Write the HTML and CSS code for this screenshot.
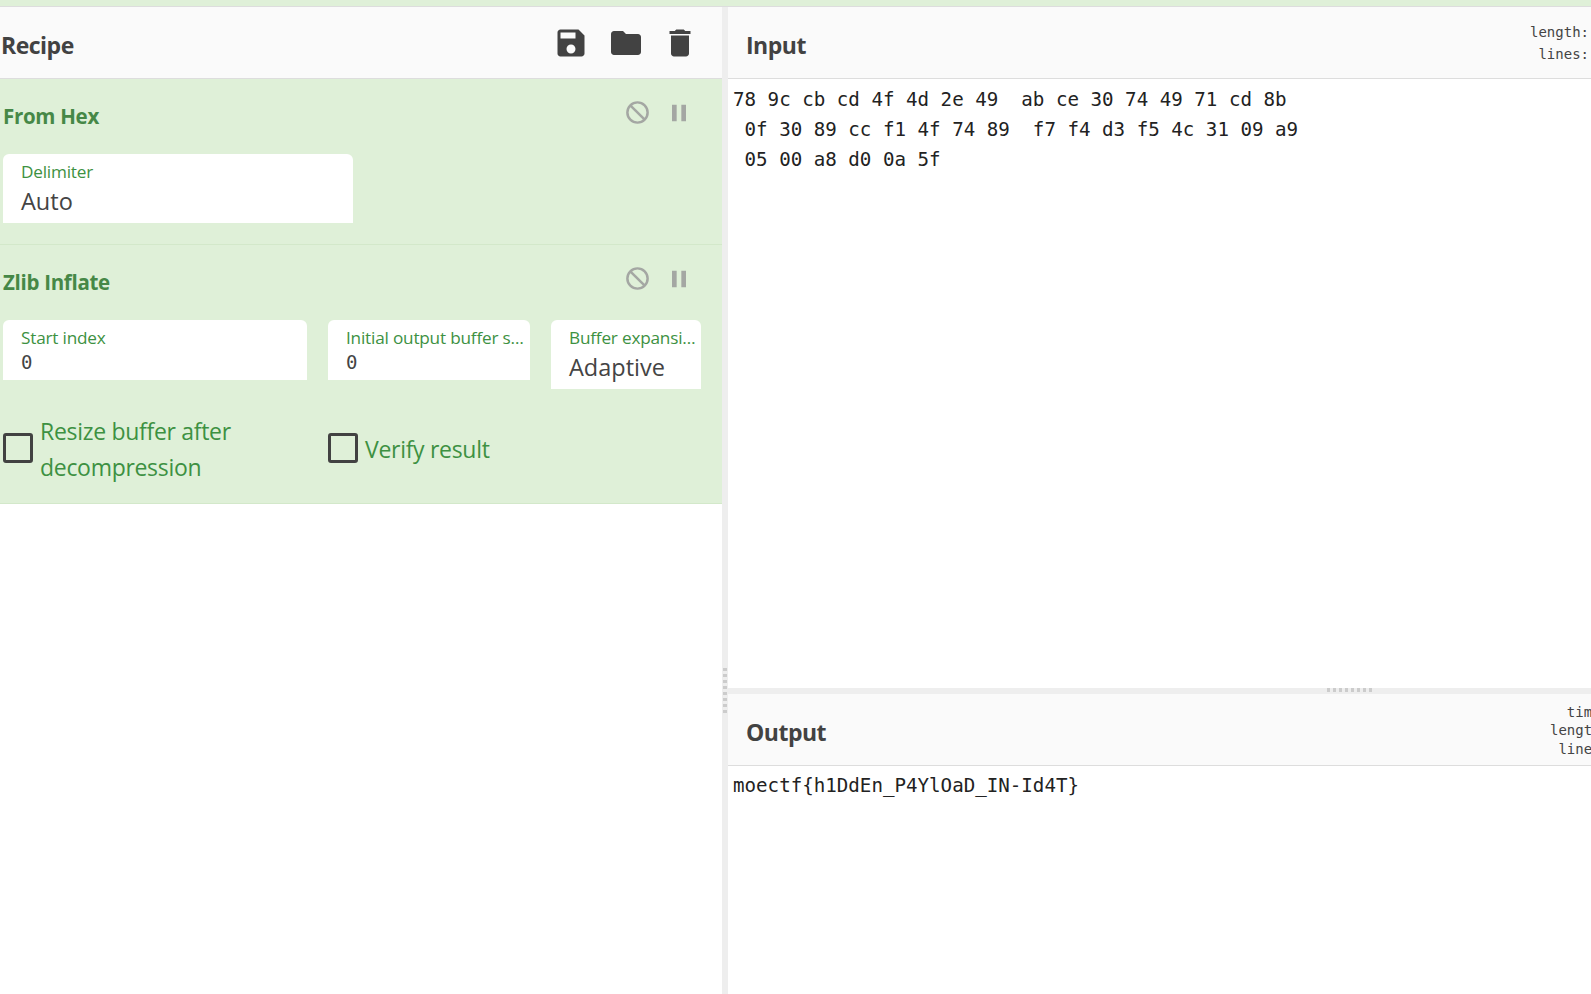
FILE: index.html
```html
<!DOCTYPE html>
<html lang="en">
<head>
<meta charset="utf-8">
<title>CyberChef</title>
<link rel="stylesheet" href="styles.css">
</head>
<body>
<div class="strip"></div>
<main class="workspace">
  <section class="recipe">
    <header class="bar recipe-bar">
      <h2 class="title recipe-title">Recipe</h2>
      <div class="tools">
        <svg class="tool" viewBox="0 0 24 24"><path d="M17 3H5c-1.11 0-2 .9-2 2v14c0 1.1.89 2 2 2h14c1.1 0 2-.9 2-2V7l-4-4zm-5 16c-1.66 0-3-1.34-3-3s1.34-3 3-3 3 1.34 3 3-1.34 3-3 3zm3-10H5V5h10v4z"/></svg>
        <svg class="tool" viewBox="0 0 24 24"><path d="M10 4H4c-1.1 0-1.99.9-1.99 2L2 18c0 1.1.9 2 2 2h16c1.1 0 2-.9 2-2V8c0-1.1-.9-2-2-2h-8l-2-2z"/></svg>
        <svg class="tool" viewBox="0 0 24 24"><path d="M6 19c0 1.1.9 2 2 2h8c1.1 0 2-.9 2-2V7H6v12zM19 4h-3.5l-1-1h-5l-1 1H5v2h14V4z"/></svg>
      </div>
    </header>
    <article class="op op-hex">
      <div class="op-head">
        <h3 class="op-title">From Hex</h3>
        <div class="op-icons">
          <svg class="ban" viewBox="0 0 24 24"><circle cx="12" cy="12" r="9"/><line x1="5.6" y1="5.6" x2="18.4" y2="18.4"/></svg>
          <svg class="pause" viewBox="0 0 24 24"><path d="M6 19h4V5H6v14zm8-14v14h4V5h-4z"/></svg>
        </div>
      </div>
      <div class="field select w-delim">
        <span class="label">Delimiter</span>
        <span class="value">Auto</span>
      </div>
    </article>
    <article class="op op-zlib">
      <div class="op-head">
        <h3 class="op-title">Zlib Inflate</h3>
        <div class="op-icons">
          <svg class="ban" viewBox="0 0 24 24"><circle cx="12" cy="12" r="9"/><line x1="5.6" y1="5.6" x2="18.4" y2="18.4"/></svg>
          <svg class="pause" viewBox="0 0 24 24"><path d="M6 19h4V5H6v14zm8-14v14h4V5h-4z"/></svg>
        </div>
      </div>
      <div class="fields">
        <div class="field number w-start">
          <span class="label">Start index</span>
          <span class="num">0</span>
        </div>
        <div class="field number w-init">
          <span class="label">Initial output buffer size</span>
          <span class="num">0</span>
        </div>
        <div class="field select w-buf">
          <span class="label">Buffer expansion type</span>
          <span class="value">Adaptive</span>
        </div>
      </div>
      <div class="checks">
        <label class="check check-resize"><span class="box"></span><span class="check-text">Resize buffer after decompression</span></label>
        <label class="check"><span class="box"></span><span class="check-text">Verify result</span></label>
      </div>
    </article>
  </section>
  <div class="gutter-v"><div class="dots-v"></div></div>
  <section class="io">
    <div class="pane input-pane">
      <header class="bar io-bar">
        <h2 class="title">Input</h2>
        <div class="stats stats-in">length:<br>lines:</div>
      </header>
      <pre class="text">78 9c cb cd 4f 4d 2e 49  ab ce 30 74 49 71 cd 8b
 0f 30 89 cc f1 4f 74 89  f7 f4 d3 f5 4c 31 09 a9
 05 00 a8 d0 0a 5f</pre>
    </div>
    <div class="gutter-h"><div class="dots-h"></div></div>
    <div class="pane output-pane">
      <header class="bar io-bar">
        <h2 class="title">Output</h2>
        <div class="stats stats-out">time:<br>length:<br>lines:</div>
      </header>
      <pre class="text text-out">moectf{h1DdEn_P4YlOaD_IN-Id4T}</pre>
    </div>
  </section>
</main>
</body>
</html>
```
FILE: styles.css
```css
* { box-sizing: border-box; }
html, body { margin: 0; height: 994px; overflow: hidden; background: #fff; }
body { font-family: "Open Sans", "Noto Sans", sans-serif; color: #444; }

.strip { height: 7px; background: #dff0d8; border-bottom: 1px solid #ddd; }
.workspace { display: grid; grid-template-columns: 722px 6px 863px; height: 987px; }

.bar {
  height: 72px; display: flex; align-items: center; justify-content: space-between;
  background: #fafafa; border-bottom: 1px solid #ddd;
}
.title { margin: 4px 0 0; font-size: 23px; font-weight: 700; color: #424242; letter-spacing: -0.5px; }
.recipe-bar { padding: 0 24px 0 1px; }
.tools { display: flex; gap: 18px; }
.tool { width: 36px; height: 36px; fill: #424242; display: block; }
.tool:first-child { margin-right: 1px; }

.op { background: #dff0d8; border-bottom: 1px solid #d3e8ca; padding: 0 0 0 3px; }
.op-hex { height: 166px; }
.op-zlib { height: 259px; }
.op-head { height: 75px; display: flex; align-items: center; justify-content: space-between; padding: 0 29px 2px 0; }
.op-title { margin: 0; font-size: 20.5px; font-weight: 700; color: #468847; letter-spacing: -0.3px; }
.op-icons { display: flex; align-items: center; gap: 14px; margin-top: -6px; }
.ban { width: 27px; height: 27px; fill: none; stroke: #a4a7a3; stroke-width: 2.2; display: block; }
.pause { width: 28px; height: 28px; fill: #a4a7a3; display: block; }

.fields { display: flex; gap: 21px; align-items: flex-start; }
.field { background: #fff; border-radius: 6px 6px 0 0; padding: 5px 2px 0 18px; display: flex; flex-direction: column; }
.field.select { height: 69px; }
.field.number { height: 60px; }
.w-delim { width: 350px; }
.w-start { width: 304px; }
.w-init { width: 202px; padding-right: 4px; }
.w-buf { width: 150px; }
.label {
  font-size: 17.2px; line-height: 26px; color: #3d9142; letter-spacing: -0.2px;
  white-space: nowrap; overflow: hidden; text-overflow: ellipsis;
}
.value { font-size: 23.5px; line-height: 32px; color: #444; }
.num { font-family: "DejaVu Sans Mono", monospace; font-size: 19px; line-height: 22px; color: #444; }

.checks { display: flex; gap: 21px; margin-top: 24px; align-items: center; }
.check { display: flex; align-items: center; gap: 7px; font-size: 23px; line-height: 36px; color: #3d9142; letter-spacing: -0.3px; }
.check-resize { width: 304px; }
.box { flex: none; width: 30px; height: 30px; border: 3px solid #424242; border-radius: 3px; margin-top: -2px; }

.gutter-v { background: #eee; padding-top: 661px; }
.dots-v {
  width: 4px; height: 45px; margin-left: 1px;
  background: repeating-linear-gradient(to bottom, #ccc 0 3px, transparent 3px 6px);
}

.io { display: flex; flex-direction: column; min-width: 0; overflow: hidden; }
.io-bar { padding: 0 0 0 18px; }
.pane { overflow: hidden; }
.input-pane { height: 681px; }
.output-pane { flex: 1; }
.gutter-h { height: 6px; background: #eee; padding-left: 599px; }
.dots-h {
  width: 45px; height: 4px;
  background: repeating-linear-gradient(to right, #ccc 0 3px, transparent 3px 6px);
}
.stats {
  font-family: "DejaVu Sans Mono", monospace; font-size: 14px; color: #444; text-align: right;
  flex: none;
}
.stats-in { line-height: 22px; margin-right: 2px; }
.stats-out { line-height: 18.5px; margin-right: -18px; padding-top: 2px; }
.text {
  margin: 0; padding: 6px 0 0 5px;
  font-family: "DejaVu Sans Mono", monospace; font-size: 19.17px; line-height: 30px; color: #222;
}
.text-out { padding-top: 5px; }
```
